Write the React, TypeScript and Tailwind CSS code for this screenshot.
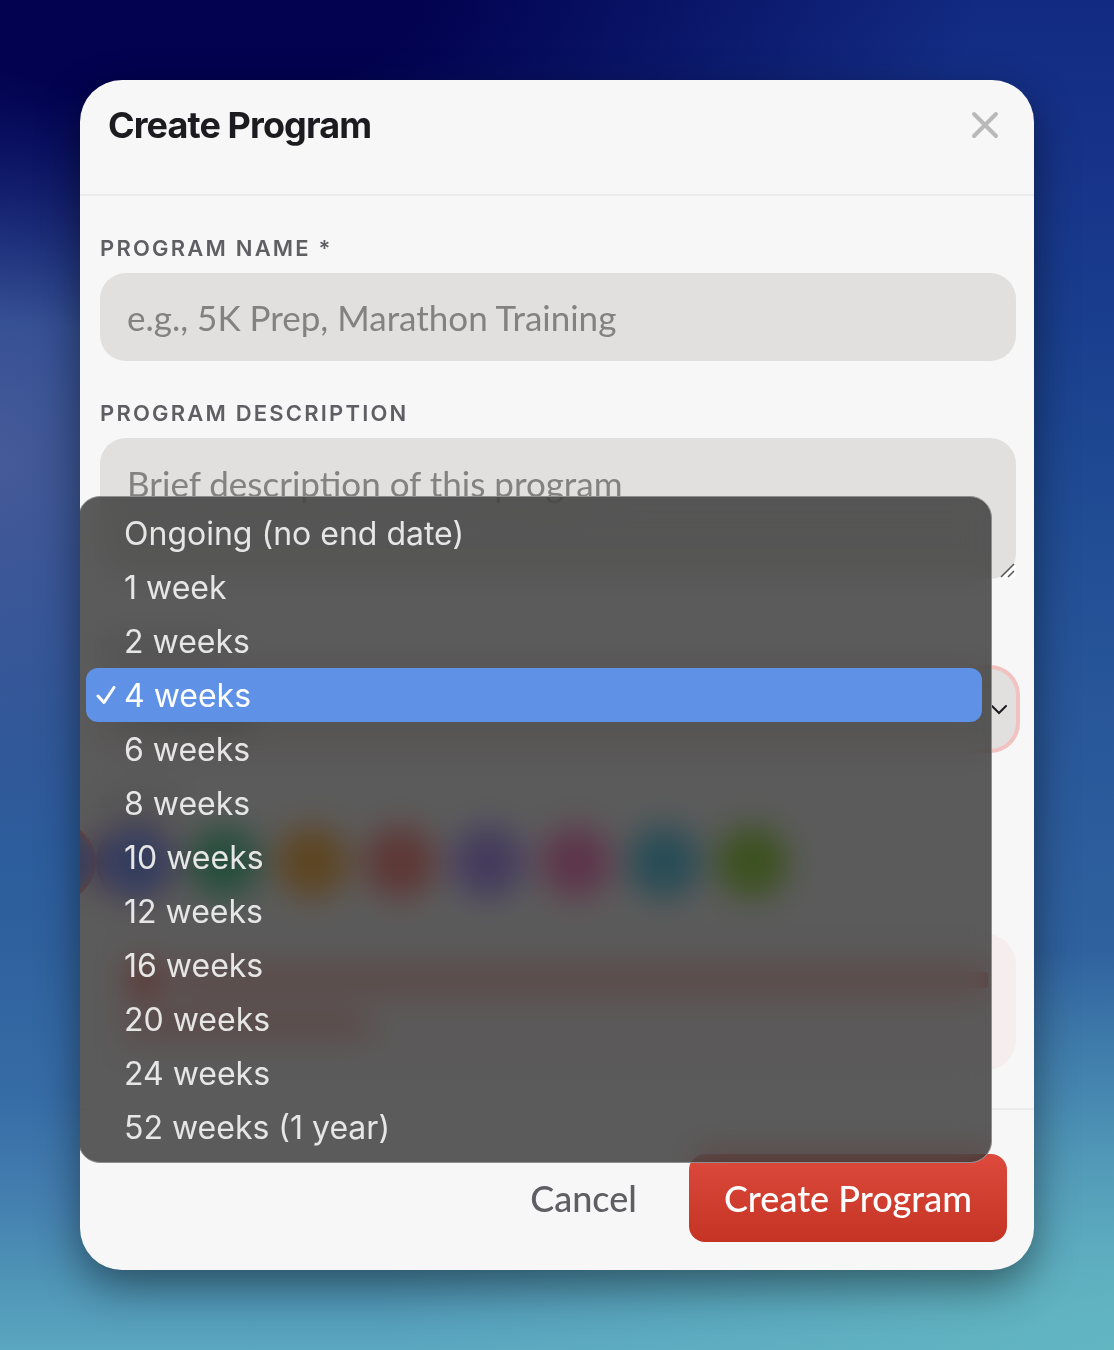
import { useState } from "react"
import { clsx } from "clsx"

const durations = [
  "Ongoing (no end date)",
  "1 week",
  "2 weeks",
  "4 weeks",
  "6 weeks",
  "8 weeks",
  "10 weeks",
  "12 weeks",
  "16 weeks",
  "20 weeks",
  "24 weeks",
  "52 weeks (1 year)",
]

const colors = [
  { name: "blue", className: "bg-[#5a82ff] ring-4 ring-[#ee5a50]" },
  { name: "green", className: "bg-[#38b880]" },
  { name: "amber", className: "bg-[#f5a030]" },
  { name: "red", className: "bg-[#f8706a]" },
  { name: "violet", className: "bg-[#9878ff]" },
  { name: "pink", className: "bg-[#f468ae]" },
  { name: "cyan", className: "bg-[#40b4d4]" },
  { name: "lime", className: "bg-[#84c828]" },
]

const labelClass =
  "mb-2 block h-8 font-[Inter] text-[22px] leading-[30px] font-semibold tracking-widest text-[#5f5e63] uppercase"
const fieldClass =
  "block w-full rounded-[26px] bg-[#e1e0de] px-[27px] text-[35px] text-[#1c1b20] placeholder:text-[#828281] outline-none"

export default function App() {
  const [duration, setDuration] = useState("4 weeks")
  const [color, setColor] = useState("blue")
  const [menuOpen, setMenuOpen] = useState(true)

  return (
    <div className="min-h-screen bg-[radial-gradient(ellipse_800px_330px_at_180px_0px,#020250_30%,transparent_100%),radial-gradient(ellipse_320px_400px_at_0px_460px,#465a98_0%,transparent_100%),radial-gradient(ellipse_740px_400px_at_100%_100%,#62b6c2_0%,transparent_100%),linear-gradient(to_bottom,#122a82_0%,#17348a_13%,#1a3f8e_25%,#204c94_38%,#285699_52%,#2f619e_70%,#366ca6_81%,#447fb0_89%,#4f95b6_95%,#5ba6c0_100%)] p-20 font-[Lato,sans-serif]">
      <form
        className="relative overflow-hidden rounded-[42px] bg-[#f7f7f7] shadow-[0_16px_44px_rgba(0,0,0,0.45)]"
        onSubmit={(e) => e.preventDefault()}
      >
        <header className="flex h-29 items-start justify-between border-b-2 border-[#ececec] px-7 pt-5">
          <h1 className="font-[Inter] text-4xl leading-[50px] font-bold tracking-tight text-[#1c1b20]">
            Create Program
          </h1>
          <button type="button" aria-label="Close" className="flex h-[50px] w-[42px] items-center justify-center text-[#b9b9b9]">
            <svg className="size-7" viewBox="0 0 28 28" fill="none" stroke="currentColor" strokeWidth="4" strokeLinecap="round">
              <path d="M3 3l22 22M25 3L3 25" />
            </svg>
          </button>
        </header>

        <div className="pt-[37px] pr-[18px] pb-[37px] pl-5">
          <div className="mb-[37px]">
            <label htmlFor="name" className={labelClass}>Program Name *</label>
            <input id="name" className={clsx(fieldClass, "h-22")} placeholder="e.g., 5K Prep, Marathon Training" />
          </div>

          <div className="mb-[50px]">
            <label htmlFor="description" className={labelClass}>Program Description</label>
            <div className="relative">
              <textarea
                id="description"
                className={clsx(fieldClass, "h-[141px] resize-none pt-5 leading-[50px]")}
                placeholder="Brief description of this program"
              />
              <svg className="absolute right-0 bottom-0 size-4" viewBox="0 0 16 16" fill="none">
                <path d="M3 16L16 3M10 16L16 10" stroke="#fff" strokeWidth="3" />
                <path d="M1 14L14 1M8 14L14 8" stroke="#555" strokeWidth="1.5" />
              </svg>
            </div>
          </div>

          <div className="mb-[37px]">
            <div className="mb-2 flex h-8 items-center">
              <div className="h-3 w-32 rounded bg-[#5f5e63]/40" />
            </div>
            <div className="relative">
              <select
                aria-label="Duration"
                value={duration}
                onChange={(e) => setDuration(e.target.value)}
                className={clsx(fieldClass, "h-20 appearance-none ring-4 ring-[#f1c2c0]")}
              >
                {durations.map((d) => (
                  <option key={d}>{d}</option>
                ))}
              </select>
              <svg className="pointer-events-none absolute top-[35px] right-2 h-3 w-[18px]" viewBox="0 0 18 12" fill="none" stroke="#1c1b20" strokeWidth="2" strokeLinecap="round">
                <path d="M2 2l7 7 7-7" />
              </svg>

              {menuOpen && (
                <ul
                  role="listbox"
                  aria-label="Duration"
                  className="absolute -top-[173px] right-6 -left-[22px] z-10 rounded-[22px] border border-[#8f8f8f] bg-[#272727]/75 pt-[9px] pr-[9px] pb-2 pl-[7px] font-[Inter] text-[32px] leading-[54px] text-[#e6e6e6] backdrop-blur-lg backdrop-saturate-125"
                >
                  {durations.map((d) => (
                    <li
                      key={d}
                      role="option"
                      aria-selected={d === duration}
                      onClick={() => {
                        setDuration(d)
                        setMenuOpen(false)
                      }}
                      className={clsx(
                        "flex h-[54px] items-center rounded-xl pt-0.5 pl-[10px]",
                        d === duration && "bg-[#5f92e6] text-white"
                      )}
                    >
                      <span className="flex w-7 shrink-0">
                        {d === duration && (
                          <svg className="size-5" viewBox="0 0 20 20" fill="none" stroke="currentColor" strokeWidth="3" strokeLinecap="round" strokeLinejoin="round">
                            <path d="M2 10l6 6.500L18 1.500" />
                          </svg>
                        )}
                      </span>
                      {d}
                    </li>
                  ))}
                </ul>
              )}
            </div>
          </div>

          <fieldset aria-label="Color">
            <div className="mb-2 flex h-8 items-center">
              <div className="h-3 w-20 rounded bg-[#5f5e63]/40" />
            </div>
            <div className="relative flex gap-4">
              <span className="absolute -left-20 size-18 rounded-full bg-[#5a82ff] ring-4 ring-[#ee5a50]" />
              {colors.map((c) => (
                <input
                  key={c.name}
                  type="radio"
                  name="color"
                  aria-label={c.name}
                  checked={color === c.name}
                  onChange={() => setColor(c.name)}
                  className={clsx("size-18 appearance-none rounded-full", c.className)}
                />
              ))}
            </div>
          </fieldset>

          {/* Notice strip */}
          <div className="mt-[35px] h-[138px] rounded-[32px] bg-[#f6eeee] px-7 pt-[31px]">
            <div className="flex items-center gap-3">
              <svg className="size-8 shrink-0" viewBox="0 0 32 32" fill="#e02a1a">
                <circle cx="16" cy="16" r="15" />
              </svg>
              <div className="h-4 grow rounded bg-[#dc4a3e]/60" />
            </div>
            <div className="mt-5 h-4 w-60 rounded bg-[#dc4a3e]/60" />
          </div>
        </div>

        <footer className="flex justify-end gap-4 border-t-2 border-[#ececec] pt-11 pr-[27px] pb-7">
          <button type="button" className="h-22 px-9 text-4xl font-medium text-[#5f5e63]">
            Cancel
          </button>
          <button
            type="submit"
            className="h-22 rounded-2xl bg-linear-to-b from-[#dd4a3d] to-[#c53324] px-[35px] text-4xl font-medium text-white"
          >
            Create Program
          </button>
        </footer>
      </form>
    </div>
  )
}
